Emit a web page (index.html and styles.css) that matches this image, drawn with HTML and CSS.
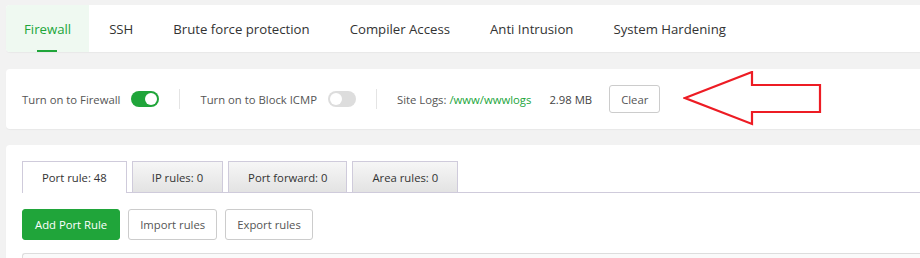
FILE: index.html
```html
<!DOCTYPE html>
<html lang="en">
<head>
  <meta charset="UTF-8" />
  <title>Security - Firewall</title>
  <link rel="stylesheet" href="styles.css">
</head>
<body>
  <div class="page">
    <div class="card nav">
      <a class="nav-item active">Firewall</a>
      <a class="nav-item">SSH</a>
      <a class="nav-item">Brute force protection</a>
      <a class="nav-item">Compiler Access</a>
      <a class="nav-item">Anti Intrusion</a>
      <a class="nav-item">System Hardening</a>
    </div>

    <div class="card status">
      <div class="status-item">
        <span>Turn on to Firewall</span>
        <span class="switch on"></span>
      </div>
      <div class="divider"></div>
      <div class="status-item">
        <span>Turn on to Block ICMP</span>
        <span class="switch"></span>
      </div>
      <div class="divider"></div>
      <div class="status-item">
        <span>Site Logs: <a class="link">/www/wwwlogs</a></span>
        <span class="size">2.98 MB</span>
        <button class="btn small">Clear</button>
      </div>

      <svg class="arrow" width="140" height="56" viewBox="0 0 140 56">
        <polygon points="2,27 69,1 69,14 137,14 137,41 69,41 69,53" fill="none" stroke="#ed1c24" stroke-width="2.2"/>
      </svg>
    </div>

    <div class="card rules">
      <div class="tabs">
        <div class="tab active">Port rule: 48</div>
        <div class="tab">IP rules: 0</div>
        <div class="tab">Port forward: 0</div>
        <div class="tab">Area rules: 0</div>
      </div>
      <div class="toolbar">
        <button class="btn primary">Add Port Rule</button>
        <button class="btn">Import rules</button>
        <button class="btn">Export rules</button>
      </div>
      <div class="table"></div>
    </div>
  </div>
</body>
</html>
```

FILE: styles.css
```css
body {
  margin: 0;
  background: #f2f2f2;
  font-family: 'Open Sans', sans-serif;
  color: #333;
  overflow: hidden;
}

.page {
  padding: 5px 0 0 6px;
  width: 940px;
  height: 253px;
  overflow: hidden;
}

.card {
  background: #fff;
  border-radius: 4px;
  box-shadow: 0 1px 1px rgba(0, 0, 0, 0.04);
}

.nav {
  display: flex;
  height: 47px;
  margin-bottom: 17px;
}

.nav-item {
  position: relative;
  display: flex;
  align-items: center;
  padding: 1px 20px 0;
  font-size: 13.2px;
  color: #333;
}

.nav-item.active {
  background: #eff9f1;
  color: #20a53a;
  border-radius: 4px 0 0 4px;
  padding: 1px 18px 0;
}

.nav-item.active::after {
  content: "";
  position: absolute;
  left: 31px;
  bottom: 0;
  width: 20px;
  height: 2px;
  background: #20a53a;
}

.status {
  position: relative;
  display: flex;
  align-items: center;
  height: 60px;
  padding: 0 16px;
  margin-bottom: 16px;
  font-size: 11.3px;
  color: #555;
}

.status-item {
  display: flex;
  align-items: center;
}

.switch {
  position: relative;
  width: 28px;
  height: 16px;
  margin-left: 11px;
  border-radius: 8px;
  background: #ddd;
}

.switch::after {
  content: "";
  position: absolute;
  left: 2px;
  top: 2px;
  width: 12px;
  height: 12px;
  border-radius: 50%;
  background: #fff;
}

.switch.on {
  background: #20a53a;
}

.switch.on::after {
  left: 14px;
}

.divider {
  width: 1px;
  height: 20px;
  margin: 0 20px;
  background: #e4e4e4;
}

.link {
  color: #20a53a;
}

.size {
  margin-left: 18px;
  color: #444;
}

.btn {
  height: 31px;
  padding: 0 11px;
  border: 1px solid #ccc;
  border-radius: 3px;
  background: #fff;
  color: #555;
  font-family: inherit;
  font-size: 11.3px;
}

.btn.small {
  height: 28px;
  padding: 0 11px;
  margin-left: 17px;
}

.btn.primary {
  padding: 0 12px;
  background: #20a53a;
  border-color: #20a53a;
  color: #fff;
}

.arrow {
  position: absolute;
  left: 677px;
  top: 2px;
}

.rules {
  padding: 16px 16px 0;
  height: 120px;
}

.tabs {
  display: flex;
  gap: 5px;
  border-bottom: 1px solid #cfcbdb;
}

.tab {
  height: 30px;
  padding: 0 19px;
  margin-bottom: -1px;
  display: flex;
  align-items: center;
  border: 1px solid #cfcbdb;
  border-bottom: none;
  background: linear-gradient(#f6f6f6, #e3e3e3);
  font-size: 11.3px;
  color: #333;
}

.tab.active {
  background: #fff;
  height: 31px;
}

.toolbar {
  display: flex;
  gap: 8px;
  margin-top: 16px;
}

.table {
  margin-top: 13px;
  height: 40px;
  border-top: 1px solid #ddd;
  border-left: 1px solid #ddd;
  border-radius: 3px 0 0 0;
  background: #fafafa;
}
```
